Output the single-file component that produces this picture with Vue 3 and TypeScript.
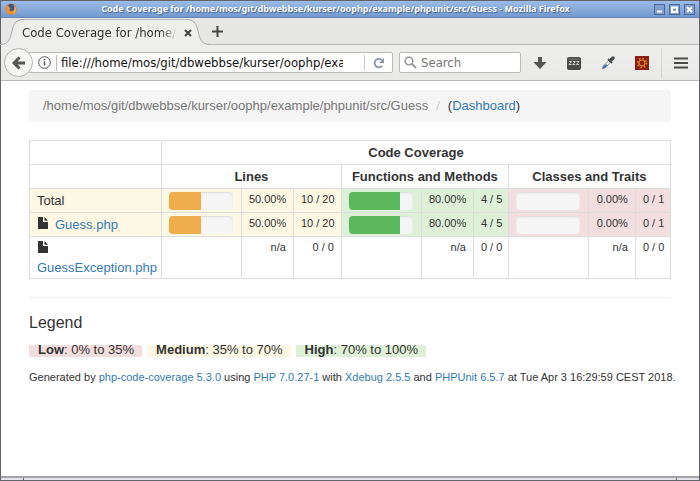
<script setup lang="ts">
import { ref } from 'vue'

type Level = 'low' | 'medium' | 'high' | 'none'

interface Metric {
  level: Level
  percent: number | null
  count: string
}

interface CoverageRow {
  name: string
  file: boolean
  metrics: Metric[]
}

const path = '/home/mos/git/dbwebbse/kurser/oophp/example/phpunit/src/Guess'
const address = ref(`file://${path}/index.html`)
const query = ref('')

const measured: Metric[] = [
  { level: 'medium', percent: 50, count: '10 / 20' },
  { level: 'high', percent: 80, count: '4 / 5' },
  { level: 'low', percent: 0, count: '0 / 1' },
]
const empty: Metric = { level: 'none', percent: null, count: '0 / 0' }

const rows: CoverageRow[] = [
  { name: 'Total', file: false, metrics: measured },
  { name: 'Guess.php', file: true, metrics: measured },
  { name: 'GuessException.php', file: true, metrics: [empty, empty, empty] },
]

const legend: { level: Level; label: string; range: string }[] = [
  { level: 'low', label: 'Low', range: '0% to 35%' },
  { level: 'medium', label: 'Medium', range: '35% to 70%' },
  { level: 'high', label: 'High', range: '70% to 100%' },
]

const rowLevel = (row: CoverageRow): Level => row.metrics[0].level
</script>

<template>
  <div class="window">
    <header class="titlebar">
      <svg class="firefox" viewBox="0 0 12 12" aria-hidden="true">
        <circle cx="6" cy="6" r="5.5" fill="#d9661c" />
        <circle cx="6.4" cy="4.8" r="3.7" fill="#34569c" />
        <path d="M1 2.2C2 3.2 3 3 4.2 3.2 3.6 4.2 5 4.6 6 5c-.8 1-1.8.8-1.6 2C5 8.8 8.400 8.600 9 6.600c.6-1.800 0-3.600-1-4.800 3 .8 4.200 4.200 3 7C9.500 12 4 12.500 1.700 9.500.2 7.500.3 4 1 2.200z" fill="#f0932b" />
        <path d="M9.600 3c1.800 2.500 1 6-1.200 7.200C10 8 10.200 5.500 9.600 3z" fill="#fbd55a" />
      </svg>
      <h1 class="title">Code Coverage for {{ path }} - Mozilla Firefox</h1>
      <div class="window-buttons">
        <button type="button" aria-label="Minimize">
          <svg viewBox="0 0 9 9"><path d="M2 6.500h5" /></svg>
        </button>
        <button type="button" aria-label="Maximize">
          <svg viewBox="0 0 9 9"><path d="M2 2.500h5v4.500H2z" /></svg>
        </button>
        <button type="button" aria-label="Close">
          <svg viewBox="0 0 9 9"><path d="M2 2l5 5M7 2L2 7" /></svg>
        </button>
      </div>
    </header>

    <nav class="tabs">
      <svg class="tab-edge" viewBox="0 0 24 26" aria-hidden="true">
        <path class="tab-fill" d="M0 26C10 25.500 10 20 12 12 14 3 17 .500 24 .500V26z" />
        <path class="tab-line" d="M0 25.500C9 25.500 10 20 12 12 14 3 17 .500 24 .500" />
      </svg>
      <div class="tab">
        <span class="tab-title">Code Coverage for {{ path }}</span>
        <button class="tab-close" type="button" aria-label="Close tab">
          <svg viewBox="0 0 8 8"><path d="M1 1l6 6M7 1L1 7" /></svg>
        </button>
      </div>
      <svg class="tab-edge" viewBox="0 0 24 26" aria-hidden="true">
        <path class="tab-fill" d="M24 26C14 25.500 14 20 12 12 10 3 7 .500 0 .500V26z" />
        <path class="tab-line" d="M24 25.500C15 25.500 14 20 12 12 10 3 7 .500 0 .500" />
      </svg>
      <div class="tabs-rest">
        <button class="new-tab" type="button" aria-label="New tab">
          <svg viewBox="0 0 11 11"><path d="M5.500 0v11M0 5.500h11" /></svg>
        </button>
      </div>
    </nav>

    <div class="toolbar">
      <button class="back" type="button" aria-label="Back">
        <svg viewBox="0 0 14 14"><path d="M7.500 1.500L2 7l5.500 5.500M2.500 7H13" /></svg>
      </button>
      <div class="field address">
        <svg class="info" viewBox="0 0 13 13" aria-hidden="true">
          <circle cx="6.500" cy="6.500" r="5.800" fill="none" stroke="#555" />
          <path d="M6.500 5.500v4M6.500 3v1.500" stroke="#555" stroke-width="1.500" />
        </svg>
        <input v-model="address" class="address-input" type="text" aria-label="Address" />
        <button class="reload" type="button" aria-label="Reload">
          <svg viewBox="0 0 12 12">
            <path d="M9 8.800A4.200 4.200 0 1 1 8.600 3" fill="none" stroke="#8796a4" stroke-width="1.800" />
            <path d="M11 1v5H6z" fill="#8796a4" />
          </svg>
        </button>
      </div>
      <div class="field search">
        <svg class="lens" viewBox="0 0 13 13" aria-hidden="true">
          <circle cx="5" cy="5" r="3.800" fill="none" stroke="#999" stroke-width="1.600" />
          <path d="M8 8l4 4" stroke="#999" stroke-width="2" />
        </svg>
        <input v-model="query" class="search-input" type="text" placeholder="Search" aria-label="Search" />
      </div>
      <div class="actions">
        <button type="button" aria-label="Downloads">
          <svg viewBox="0 0 14 14"><path d="M5 1h4v5h4.500L7 13 .500 6H5z" fill="#555" /></svg>
        </button>
        <button type="button" aria-label="Sleep mode">
          <svg viewBox="0 0 14 14">
            <rect y="1" width="14" height="13" rx="2" fill="#4a4a4a" />
            <path d="M1.500 3h11" stroke="#777" />
            <path d="M2 5.500h2.500L2 8.500h2.500M5.800 5.500h2.500l-2.500 3h2.500M9.500 5.500H12l-2.500 3H12" fill="none" stroke="#ddd" stroke-width=".9" />
          </svg>
        </button>
        <button type="button" aria-label="Color picker">
          <svg viewBox="0 0 14 14">
            <path d="M1 13l1-3 6-6 2 2-6 6z" fill="#e4e9f2" stroke="#888" stroke-width=".7" />
            <path d="M1.500 12.500l1-2.500 2.500-2L6.500 9.500 4 12z" fill="#3d6ed0" />
            <path d="M7 3l4 4" stroke="#444c50" stroke-width="1.800" />
            <path d="M9.500 4.500L12 2" stroke="#444c50" stroke-width="3.400" stroke-linecap="round" />
          </svg>
        </button>
        <button type="button" aria-label="Extension">
          <svg viewBox="0 0 14 14">
            <path d="M0 0h14v14H0z" fill="#8b2010" />
            <circle cx="7" cy="7" r="3" fill="none" stroke="#e88a1c" stroke-width="1.200" />
            <circle cx="7" cy="7" r="4.500" fill="none" stroke="#e88a1c" stroke-width="1.600" stroke-dasharray="1.400 2.130" />
          </svg>
        </button>
        <button class="menu" type="button" aria-label="Menu">
          <svg viewBox="0 0 14 14"><path d="M0 2.500h14M0 7h14M0 11.500h14" stroke="#4a4a4a" stroke-width="2.200" stroke-linecap="round" /></svg>
        </button>
      </div>
    </div>

    <main class="page">
      <ol class="breadcrumb">
        <li>{{ path }}</li>
        <li>(<a href="#dashboard">Dashboard</a>)</li>
      </ol>

      <table class="coverage">
        <colgroup>
          <col />
          <col class="col-bar" /><col class="col-percent" /><col class="col-lines" />
          <col class="col-bar" /><col class="col-percent" /><col class="col-count" />
          <col class="col-bar" /><col class="col-percent-short" /><col class="col-count" />
        </colgroup>
        <thead>
          <tr>
            <td></td>
            <th colspan="9" scope="colgroup">Code Coverage</th>
          </tr>
          <tr>
            <td></td>
            <th colspan="3" scope="colgroup">Lines</th>
            <th colspan="3" scope="colgroup">Functions and Methods</th>
            <th colspan="3" scope="colgroup">Classes and Traits</th>
          </tr>
        </thead>
        <tbody>
          <tr v-for="row in rows" :key="row.name">
            <td :class="rowLevel(row)">
              <template v-if="row.file">
                <svg class="file" viewBox="0 0 10 12" aria-hidden="true">
                  <path d="M0 0h5v5h5v7H0zM6.500 0L10 3.700H6.500z" fill="#333" />
                </svg>
                <a :href="'#' + row.name">{{ row.name }}</a>
              </template>
              <template v-else>{{ row.name }}</template>
            </td>
            <template v-for="(metric, index) in row.metrics" :key="index">
              <td class="bar" :class="metric.level">
                <div v-if="metric.percent !== null" class="progress">
                  <div class="progress-bar" :style="{ width: metric.percent + '%' }"></div>
                </div>
              </td>
              <td class="number" :class="metric.level">
                {{ metric.percent === null ? 'n/a' : metric.percent.toFixed(2) + '%' }}
              </td>
              <td class="number" :class="metric.level">{{ metric.count }}</td>
            </template>
          </tr>
        </tbody>
      </table>

      <footer class="footer">
        <h2>Legend</h2>
        <p class="legend">
          <span v-for="item in legend" :key="item.label" :class="item.level"><strong>{{ item.label }}</strong>: {{ item.range }}</span>
        </p>
        <p class="generated">
          Generated by <a href="#coverage">php-code-coverage 5.3.0</a> using
          <a href="#php">PHP 7.0.27-1</a> with <a href="#xdebug">Xdebug 2.5.5</a> and
          <a href="#phpunit">PHPUnit 6.5.7</a> at Tue Apr 3 16:29:59 CEST 2018.
        </p>
      </footer>
    </main>
    <div class="frame-bottom"><span class="grip"></span></div>
  </div>
</template>

<style>
body {
  margin: 0;
}
</style>

<style scoped>
* {
  box-sizing: border-box;
}

.window {
  display: flex;
  flex-direction: column;
  min-height: 100vh;
  border: 1px solid #63636b;
  background: #fff;
  color: #333;
  font-family: "Liberation Sans", Arial, sans-serif;
  font-size: 13px;
  line-height: 20px;
}

button {
  display: flex;
  align-items: center;
  justify-content: center;
  flex: none;
  padding: 0;
  border: 0;
  background: none;
}

svg {
  display: block;
  flex: none;
}

.titlebar {
  display: flex;
  align-items: center;
  height: 17px;
  padding: 0 4px;
  border-bottom: 1px solid #6686b8;
  background: linear-gradient(#9cbce6, #7299d0);
}

.firefox {
  width: 12px;
  height: 12px;
}

.title {
  flex: 1;
  min-width: 0;
  margin: 0;
  overflow: hidden;
  color: #fff;
  font-family: "Noto Sans", "DejaVu Sans", sans-serif;
  font-size: 9px;
  font-weight: 700;
  line-height: 16px;
  text-align: center;
  text-overflow: ellipsis;
  text-shadow: 1px 1px 1px #45658f;
  white-space: nowrap;
}

.window-buttons {
  display: flex;
  gap: 4px;
}

.window-buttons button {
  width: 11px;
  height: 11px;
  border: 1px solid #4a6a9c;
  background: #7f9fce;
}

.window-buttons svg {
  width: 9px;
  height: 9px;
  fill: none;
  stroke: #fff;
  stroke-width: 2;
}

.tabs {
  display: flex;
  height: 27px;
  padding-top: 1px;
  background: #e7e7e6;
}

.tab-edge {
  width: 24px;
  height: 26px;
}

.tab-edge:first-child {
  margin-left: -1px;
}

.tab-fill {
  fill: #eeeeec;
}

.tab-line {
  fill: none;
  stroke: #a3a9b0;
}

.tab {
  z-index: 1;
  display: flex;
  align-items: center;
  width: 162px;
  border-top: 1px solid #b5bac0;
  background: #eeeeec;
}

.tab-title {
  flex: 1;
  overflow: hidden;
  margin: 0 6px 0 -2px;
  color: #333;
  font-family: "DejaVu Sans Condensed", "DejaVu Sans", sans-serif;
  font-size: 13px;
  white-space: nowrap;
  -webkit-mask-image: linear-gradient(90deg, #000 88%, transparent);
  mask-image: linear-gradient(90deg, #000 88%, transparent);
}

.tab-close {
  margin-right: -6px;
}

.tab-close svg {
  width: 8px;
  height: 8px;
  fill: none;
  stroke: #444;
  stroke-width: 2;
}

.tabs-rest {
  display: flex;
  align-items: center;
  flex: 1;
  border-bottom: 1px solid #b8b8b6;
}

.new-tab {
  margin-left: 2px;
}

.new-tab svg {
  width: 11px;
  height: 11px;
  stroke: #444;
  stroke-width: 2;
}

.toolbar {
  display: flex;
  align-items: center;
  height: 36px;
  padding-left: 3px;
  border-bottom: 1px solid #b9b8b3;
  background: linear-gradient(#eeeeec, #e9e9e7);
}

.back {
  z-index: 1;
  width: 29px;
  height: 29px;
  margin-right: -6px;
  border: 1px solid #b2b2b0;
  border-radius: 50%;
  background: #f5f5f4;
}

.back svg {
  width: 14px;
  height: 14px;
  fill: none;
  stroke: #555;
  stroke-width: 3;
}

.field {
  display: flex;
  align-items: center;
  min-width: 0;
  height: 21px;
  border: 1px solid #bbbbb9;
  border-radius: 2px;
  background: #fff;
}

.address {
  flex: 1;
  margin-right: 6px;
  padding-left: 10px;
}

.info {
  width: 13px;
  height: 13px;
}

input {
  flex: 1;
  min-width: 0;
  height: 16px;
  padding: 0;
  border: 0;
  outline: 0;
  background: none;
  color: #111;
  font-family: "DejaVu Sans Condensed", "DejaVu Sans", sans-serif;
  font-size: 13px;
}

.address-input {
  margin: 0 21px 0 5px;
  padding-left: 4px;
  border-left: 1px solid #bbb;
}

.reload {
  width: 28px;
  height: 15px;
  border-left: 1px solid #ccc;
}

.reload svg {
  width: 12px;
  height: 12px;
}

.search {
  flex: 0 1 122px;
  gap: 4px;
  padding-left: 4px;
}

.lens {
  width: 13px;
  height: 13px;
}

.search-input::placeholder {
  color: #777;
  opacity: 1;
}

.actions {
  display: flex;
  align-items: center;
  gap: 20px;
  padding-left: 12px;
}

.actions svg {
  width: 14px;
  height: 14px;
}

.menu {
  width: 38px;
  height: 30px;
  margin-left: -8px;
  border-left: 1px solid #d4d4d2;
}

.page {
  flex: 1;
  padding: 9px 28px 0;
}

a {
  color: #337ab7;
  text-decoration: none;
}

.breadcrumb {
  display: flex;
  flex-wrap: wrap;
  margin: 0 0 18px;
  padding: 6px 14px;
  border-radius: 4px;
  background: #f5f5f5;
  list-style: none;
}

.breadcrumb li:first-child {
  color: #777;
}

.breadcrumb li + li::before {
  padding: 0 8px;
  color: #ccc;
  content: "/";
}

.coverage {
  width: 100%;
  table-layout: fixed;
  border-collapse: collapse;
  line-height: 19px;
}

.col-bar {
  width: 80px;
}

.col-percent {
  width: 52px;
}

.col-percent-short {
  width: 47px;
}

.col-lines {
  width: 48px;
}

.col-count {
  width: 35px;
}

.coverage th,
.coverage td {
  height: 24px;
  padding: 2px 7px 1px;
  border: 1px solid #ddd;
  vertical-align: top;
}

.coverage th {
  text-align: center;
}

.coverage td.bar {
  padding: 3px 8px 2px 7px;
}

.coverage td.number {
  padding-top: 1px;
  font-size: 11px;
  line-height: 18px;
  text-align: right;
  white-space: nowrap;
}

.low {
  background: #f2dede;
}

.medium {
  background: #fcf8e3;
}

.high {
  background: #dff0d8;
}

.progress {
  height: 18px;
  overflow: hidden;
  border-radius: 4px;
  background: #f5f5f5;
  box-shadow: inset 0 1px 2px rgba(0, 0, 0, 0.1);
}

.progress-bar {
  height: 100%;
  background: #5cb85c;
}

.medium .progress-bar {
  background: #f0ad4e;
}

.file {
  display: inline-block;
  width: 12px;
  height: 12px;
  margin-right: 3px;
}

.file + a {
  margin-left: 3px;
}

tr:last-child .file + a {
  margin-left: 0;
}

.footer {
  margin-top: 18px;
  padding-top: 15px;
  border-top: 1px solid #eee;
}

.footer h2 {
  margin: 0;
  font-size: 16px;
  font-weight: 400;
  line-height: 20px;
}

.footer p {
  margin: 0;
}

.legend {
  display: flex;
  flex-wrap: wrap;
  gap: 5px;
}

.legend span {
  height: 12px;
  padding: 0 8px 0 9px;
  line-height: 10px;
}

.footer .legend {
  margin: 12px 0 10px;
}

.footer .generated {
  margin-right: -16px;
  font-size: 11px;
}

.frame-bottom {
  height: 4px;
  padding: 0 22px;
  border-top: 2px solid #a2a2a8;
  background: #e4e4e8;
}

.grip {
  display: block;
  height: 2px;
  border: solid #63636b;
  border-width: 0 1px;
}
</style>
